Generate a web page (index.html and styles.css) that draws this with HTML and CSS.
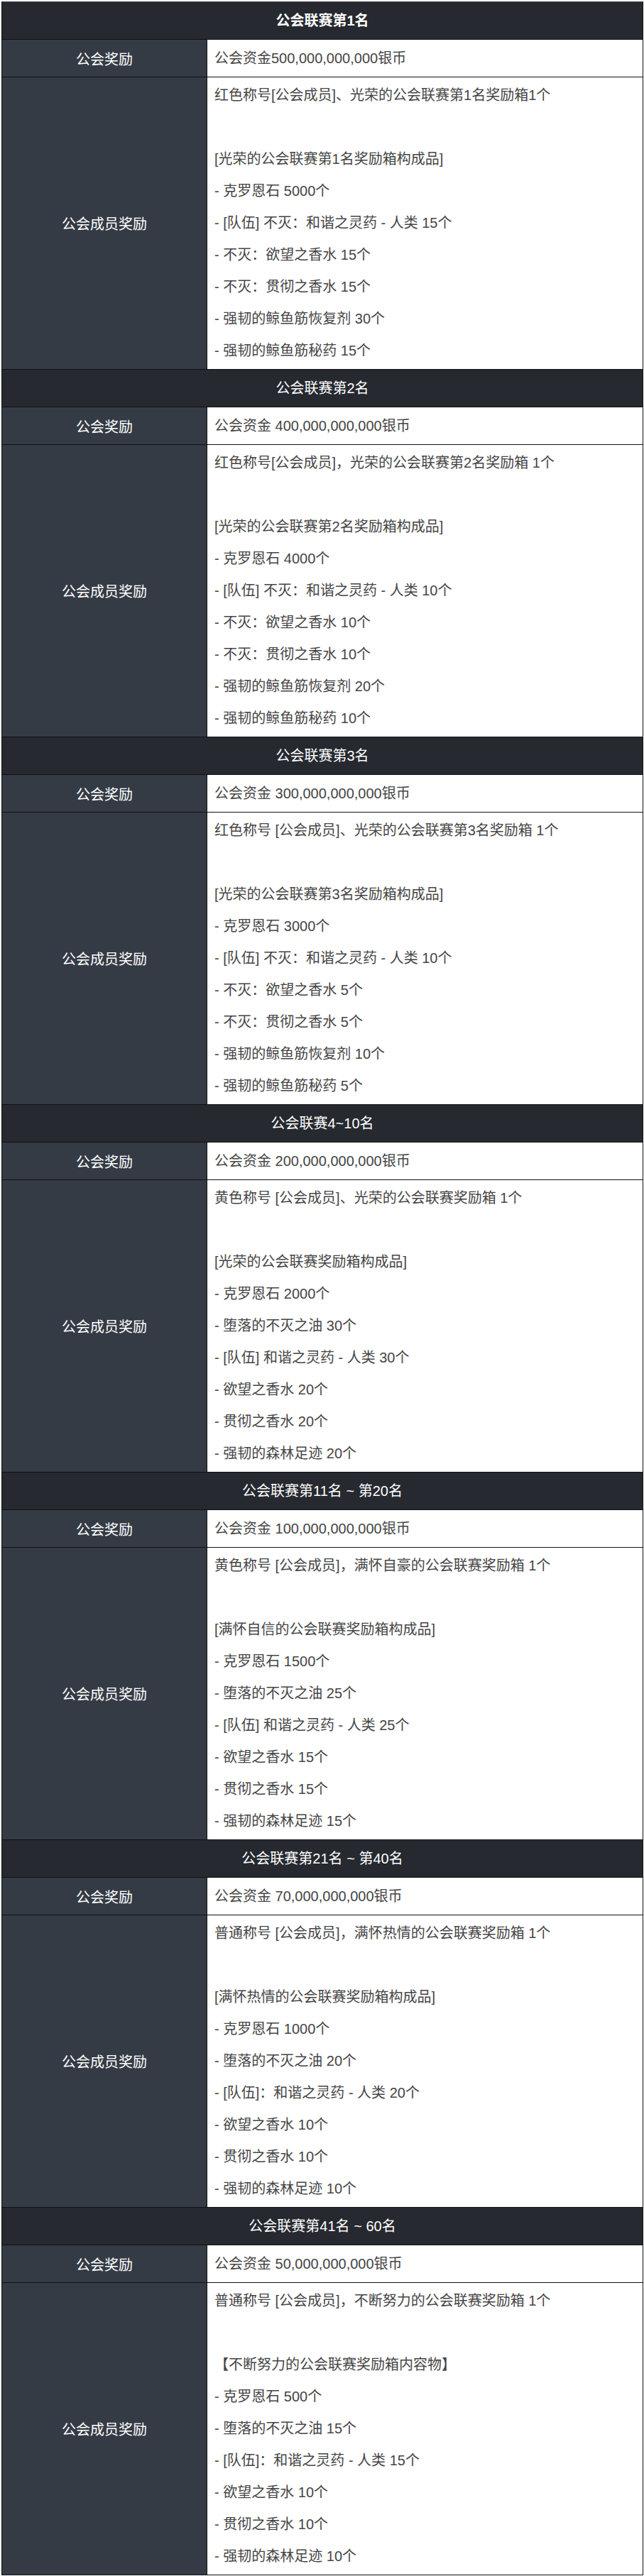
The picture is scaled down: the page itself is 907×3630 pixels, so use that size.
FILE: index.html
```html
<!DOCTYPE html>
<html lang="zh-CN">
<head>
<meta charset="utf-8">
<title>公会联赛奖励</title>
<link rel="stylesheet" href="styles.css">
</head>
<body>
<div class="table">

  <section class="section">
    <div class="head head-bold">公会联赛第1名</div>
    <div class="row guild">
      <div class="label">公会奖励</div>
      <div class="value">公会资金500,000,000,000银币</div>
    </div>
    <div class="row member">
      <div class="label">公会成员奖励</div>
      <div class="value">
        <div class="line">红色称号[公会成员]、光荣的公会联赛第1名奖励箱1个</div>
        <div class="line"></div>
        <div class="line">[光荣的公会联赛第1名奖励箱构成品]</div>
        <div class="line">- 克罗恩石 5000个</div>
        <div class="line">- [队伍] 不灭：和谐之灵药 - 人类 15个</div>
        <div class="line">- 不灭：欲望之香水 15个</div>
        <div class="line">- 不灭：贯彻之香水 15个</div>
        <div class="line">- 强韧的鲸鱼筋恢复剂 30个</div>
        <div class="line">- 强韧的鲸鱼筋秘药 15个</div>
      </div>
    </div>
  </section>

  <section class="section">
    <div class="head">公会联赛第2名</div>
    <div class="row guild">
      <div class="label">公会奖励</div>
      <div class="value">公会资金 400,000,000,000银币</div>
    </div>
    <div class="row member">
      <div class="label">公会成员奖励</div>
      <div class="value">
        <div class="line">红色称号[公会成员]，光荣的公会联赛第2名奖励箱 1个</div>
        <div class="line"></div>
        <div class="line">[光荣的公会联赛第2名奖励箱构成品]</div>
        <div class="line">- 克罗恩石 4000个</div>
        <div class="line">- [队伍] 不灭：和谐之灵药 - 人类 10个</div>
        <div class="line">- 不灭：欲望之香水 10个</div>
        <div class="line">- 不灭：贯彻之香水 10个</div>
        <div class="line">- 强韧的鲸鱼筋恢复剂 20个</div>
        <div class="line">- 强韧的鲸鱼筋秘药 10个</div>
      </div>
    </div>
  </section>

  <section class="section">
    <div class="head">公会联赛第3名</div>
    <div class="row guild">
      <div class="label">公会奖励</div>
      <div class="value">公会资金 300,000,000,000银币</div>
    </div>
    <div class="row member">
      <div class="label">公会成员奖励</div>
      <div class="value">
        <div class="line">红色称号 [公会成员]、光荣的公会联赛第3名奖励箱 1个</div>
        <div class="line"></div>
        <div class="line">[光荣的公会联赛第3名奖励箱构成品]</div>
        <div class="line">- 克罗恩石 3000个</div>
        <div class="line">- [队伍] 不灭：和谐之灵药 - 人类 10个</div>
        <div class="line">- 不灭：欲望之香水 5个</div>
        <div class="line">- 不灭：贯彻之香水 5个</div>
        <div class="line">- 强韧的鲸鱼筋恢复剂 10个</div>
        <div class="line">- 强韧的鲸鱼筋秘药 5个</div>
      </div>
    </div>
  </section>

  <section class="section">
    <div class="head">公会联赛4~10名</div>
    <div class="row guild">
      <div class="label">公会奖励</div>
      <div class="value">公会资金 200,000,000,000银币</div>
    </div>
    <div class="row member">
      <div class="label">公会成员奖励</div>
      <div class="value">
        <div class="line">黄色称号 [公会成员]、光荣的公会联赛奖励箱 1个</div>
        <div class="line"></div>
        <div class="line">[光荣的公会联赛奖励箱构成品]</div>
        <div class="line">- 克罗恩石 2000个</div>
        <div class="line">- 堕落的不灭之油 30个</div>
        <div class="line">- [队伍] 和谐之灵药 - 人类 30个</div>
        <div class="line">- 欲望之香水 20个</div>
        <div class="line">- 贯彻之香水 20个</div>
        <div class="line">- 强韧的森林足迹 20个</div>
      </div>
    </div>
  </section>

  <section class="section">
    <div class="head">公会联赛第11名 ~ 第20名</div>
    <div class="row guild">
      <div class="label">公会奖励</div>
      <div class="value">公会资金 100,000,000,000银币</div>
    </div>
    <div class="row member">
      <div class="label">公会成员奖励</div>
      <div class="value">
        <div class="line">黄色称号 [公会成员]，满怀自豪的公会联赛奖励箱 1个</div>
        <div class="line"></div>
        <div class="line">[满怀自信的公会联赛奖励箱构成品]</div>
        <div class="line">- 克罗恩石 1500个</div>
        <div class="line">- 堕落的不灭之油 25个</div>
        <div class="line">- [队伍] 和谐之灵药 - 人类 25个</div>
        <div class="line">- 欲望之香水 15个</div>
        <div class="line">- 贯彻之香水 15个</div>
        <div class="line">- 强韧的森林足迹 15个</div>
      </div>
    </div>
  </section>

  <section class="section">
    <div class="head">公会联赛第21名 ~ 第40名</div>
    <div class="row guild">
      <div class="label">公会奖励</div>
      <div class="value">公会资金 70,000,000,000银币</div>
    </div>
    <div class="row member">
      <div class="label">公会成员奖励</div>
      <div class="value">
        <div class="line">普通称号 [公会成员]，满怀热情的公会联赛奖励箱 1个</div>
        <div class="line"></div>
        <div class="line">[满怀热情的公会联赛奖励箱构成品]</div>
        <div class="line">- 克罗恩石 1000个</div>
        <div class="line">- 堕落的不灭之油 20个</div>
        <div class="line">- [队伍]：和谐之灵药 - 人类 20个</div>
        <div class="line">- 欲望之香水 10个</div>
        <div class="line">- 贯彻之香水 10个</div>
        <div class="line">- 强韧的森林足迹 10个</div>
      </div>
    </div>
  </section>

  <section class="section">
    <div class="head">公会联赛第41名 ~ 60名</div>
    <div class="row guild">
      <div class="label">公会奖励</div>
      <div class="value">公会资金 50,000,000,000银币</div>
    </div>
    <div class="row member">
      <div class="label">公会成员奖励</div>
      <div class="value">
        <div class="line">普通称号 [公会成员]，不断努力的公会联赛奖励箱 1个</div>
        <div class="line"></div>
        <div class="line">【不断努力的公会联赛奖励箱内容物】</div>
        <div class="line">- 克罗恩石 500个</div>
        <div class="line">- 堕落的不灭之油 15个</div>
        <div class="line">- [队伍]：和谐之灵药 - 人类 15个</div>
        <div class="line">- 欲望之香水 10个</div>
        <div class="line">- 贯彻之香水 10个</div>
        <div class="line">- 强韧的森林足迹 10个</div>
      </div>
    </div>
  </section>

</div>
</body>
</html>
```

FILE: styles.css
```css
html, body {
  margin: 0;
  padding: 0;
  background: #ffffff;
}

body {
  font-family: "Liberation Sans", "Noto Sans CJK SC", sans-serif;
  font-size: 20px;
}

.table {
  box-sizing: border-box;
  width: 904px;
  margin: 2px 1px 0 2px;
  border: 1px solid #111111;
  border-top-color: #4a4a4a;
}

.head {
  height: 52px;
  line-height: 52px;
  border-bottom: 1px solid #111111;
  background: #262930;
  color: #ffffff;
  text-align: center;
}

.head-bold {
  font-weight: bold;
}

.row {
  display: grid;
  grid-template-columns: 289px 1fr;
  border-bottom: 1px solid #111111;
}

.section:last-child .member {
  border-bottom: none;
}

.label {
  display: flex;
  align-items: center;
  justify-content: center;
  background: #353b45;
  color: #ffffff;
  border-right: 1px solid #111111;
}

.value {
  background: #ffffff;
  color: #454545;
  padding: 0 10px;
}

.guild .value {
  height: 52px;
  line-height: 52px;
}

.member .value {
  padding-top: 3px;
  padding-bottom: 3px;
}

.line {
  height: 45px;
  line-height: 45px;
  white-space: nowrap;
}
```
